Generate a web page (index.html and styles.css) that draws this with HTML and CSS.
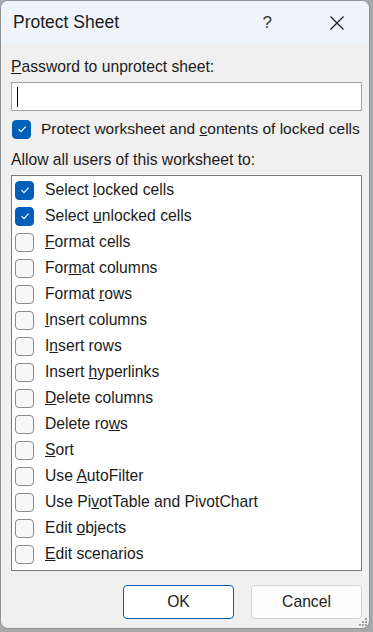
FILE: index.html
```html
<!DOCTYPE html>
<html>
<head>
  <meta charset="UTF-8">
  <title>Protect Sheet</title>
  <link rel="stylesheet" href="styles.css">
</head>
<body>
  <div class="dialog">
    <div class="titlebar">
      <span class="title">Protect Sheet</span>
      <span class="help">?</span>
      <svg class="close" width="16" height="16" viewBox="0 0 16 16">
        <path d="M1.5 1.5 L14.5 14.5 M14.5 1.5 L1.5 14.5" stroke="#1b1b1b" stroke-width="1.2" fill="none"/>
      </svg>
    </div>

    <div class="content">
      <div class="label"><u>P</u>assword to unprotect sheet:</div>
      <div class="input"><span class="caret"></span></div>

      <div class="check-row top">
        <span class="box on"><svg viewBox="0 0 12 12"><path d="M2.5 6.2 L5 8.6 L9.6 3.6" stroke="#fff" stroke-width="1.1" fill="none"/></svg></span>
        <span>Protect worksheet and <u>c</u>ontents of locked cells</span>
      </div>

      <div class="label allow">Allow all users of this worksheet to:</div>

      <div class="list">
        <div class="item"><span class="box on"><svg viewBox="0 0 12 12"><path d="M2.5 6.2 L5 8.6 L9.6 3.6" stroke="#fff" stroke-width="1.1" fill="none"/></svg></span><span>Select <u>l</u>ocked cells</span></div>
        <div class="item"><span class="box on"><svg viewBox="0 0 12 12"><path d="M2.5 6.2 L5 8.6 L9.6 3.6" stroke="#fff" stroke-width="1.1" fill="none"/></svg></span><span>Select <u>u</u>nlocked cells</span></div>
        <div class="item"><span class="box"></span><span><u>F</u>ormat cells</span></div>
        <div class="item"><span class="box"></span><span>For<u>m</u>at columns</span></div>
        <div class="item"><span class="box"></span><span>Format <u>r</u>ows</span></div>
        <div class="item"><span class="box"></span><span><u>I</u>nsert columns</span></div>
        <div class="item"><span class="box"></span><span>I<u>n</u>sert rows</span></div>
        <div class="item"><span class="box"></span><span>Insert <u>h</u>yperlinks</span></div>
        <div class="item"><span class="box"></span><span><u>D</u>elete columns</span></div>
        <div class="item"><span class="box"></span><span>Delete ro<u>w</u>s</span></div>
        <div class="item"><span class="box"></span><span><u>S</u>ort</span></div>
        <div class="item"><span class="box"></span><span>Use <u>A</u>utoFilter</span></div>
        <div class="item"><span class="box"></span><span>Use Pi<u>v</u>otTable and PivotChart</span></div>
        <div class="item"><span class="box"></span><span>Edit <u>o</u>bjects</span></div>
        <div class="item"><span class="box"></span><span><u>E</u>dit scenarios</span></div>
      </div>

      <div class="buttons">
        <button class="btn default">OK</button>
        <button class="btn">Cancel</button>
      </div>
    </div>

    <div class="grip">
      <i></i><i></i><i></i><i></i><i></i><i></i>
    </div>
  </div>
</body>
</html>
```

FILE: styles.css
```css
body {
  margin: 0;
  background: #a7a9ab;
  font-family: "Liberation Sans", Arial, sans-serif;
  color: #1b1b1b;
}

.dialog {
  position: relative;
  width: 368px;
  height: 627px;
  border: 1px solid #8f9397;
  border-radius: 8px;
  background: #f0f0f0;
  overflow: hidden;
}

.titlebar {
  display: flex;
  align-items: center;
  height: 43px;
  background: #eef4f9;
  padding: 0 0 0 12px;
}
.title { font-size: 17.5px; flex: 1; }
.help { font-size: 17px; color: #333; margin-right: 57px; }
.close { margin-right: 24px; }

.content { padding: 0 7px 0 10px; }

.label { font-size: 15.7px; margin-top: 14px; height: 18px; }
.allow { margin-top: 12px; }

.input {
  margin-top: 6px;
  height: 27px;
  background: #fff;
  border: 1px solid #a3a3a3;
  display: flex;
  align-items: center;
}
.caret {
  width: 1px;
  height: 20px;
  background: #000;
  margin-left: 5px;
}

.check-row {
  display: flex;
  align-items: center;
  font-size: 15.5px;
  margin-top: 8px;
  height: 20px;
  white-space: nowrap;
}
.check-row .box { margin: 0 10px 0 1px; }

.box {
  display: inline-flex;
  align-items: center;
  justify-content: center;
  width: 17px;
  height: 17px;
  border: 1px solid #8a8a8a;
  border-radius: 4px;
  background: #f7f7f7;
  flex: none;
}
.box.on {
  background: #005fb8;
  border-color: #005fb8;
}
.box svg { width: 12px; height: 12px; }

.list {
  margin-top: 6px;
  height: 396px;
  background: #fff;
  border: 1px solid #7a7b80;
  padding-top: 1px;
  box-sizing: border-box;
}
.item {
  display: flex;
  align-items: center;
  height: 26px;
  font-size: 15.7px;
  padding-left: 3px;
  white-space: nowrap;
}
.item .box { margin-right: 11px; }

.buttons {
  display: flex;
  justify-content: flex-end;
  gap: 17px;
  margin-top: 14px;
}
.btn {
  width: 111px;
  height: 34px;
  font-family: inherit;
  font-size: 15.7px;
  color: #1b1b1b;
  background: #fdfdfd;
  border: 1px solid #d3d3d3;
  border-radius: 4px;
}
.btn.default {
  background: #fff;
  border-color: #005fb8;
}

.grip {
  position: absolute;
  right: 2px;
  bottom: 2px;
  width: 9px;
  height: 9px;
}
.grip i {
  position: absolute;
  width: 2px;
  height: 2px;
  background: #a0a0a0;
}
.grip i:nth-child(1) { right: 0; bottom: 0; }
.grip i:nth-child(2) { right: 3px; bottom: 0; }
.grip i:nth-child(3) { right: 6px; bottom: 0; }
.grip i:nth-child(4) { right: 0; bottom: 3px; }
.grip i:nth-child(5) { right: 3px; bottom: 3px; }
.grip i:nth-child(6) { right: 0; bottom: 6px; }
```
